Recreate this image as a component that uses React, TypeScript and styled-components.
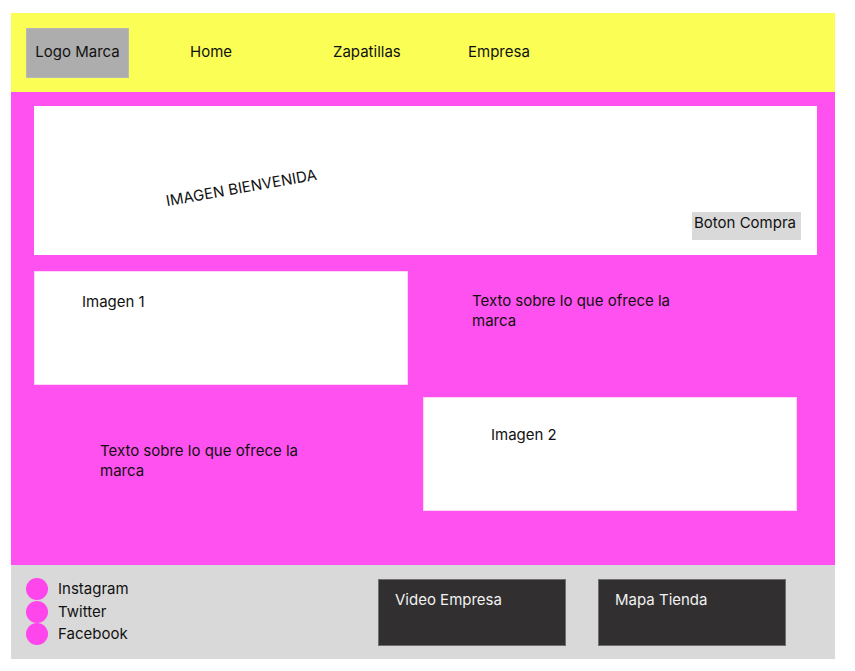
import React from "react";
import styled, { createGlobalStyle } from "styled-components";

const GlobalStyle = createGlobalStyle`
  body {
    margin: 0;
    background: #ffffff;
    font-family: Inter, "Noto Sans", "Liberation Sans", sans-serif;
    font-size: 15px;
    color: #111111;
  }
`;

const Frame = styled.div`
  width: 824px;
  margin: 13px 0 0 11px;
`;

// cabecera amarilla
const Header = styled.header`
  height: 79px;
  background: #fbff55;
  display: flex;
  align-items: flex-start;
  padding: 15px 0 0 15px;
  box-sizing: border-box;
`;

const Logo = styled.div`
  width: 103px;
  height: 50px;
  background: #adadad;
  border: 1px solid #b8b8b8;
  box-sizing: border-box;
  display: flex;
  justify-content: center;
  padding-top: 13px;
  line-height: 20px;
`;

const Nav = styled.nav`
  display: flex;
  margin-left: 61px;
  padding-top: 14px;
`;

const NavLink = styled.a<{ $w: number }>`
  width: ${(p) => p.$w}px;
  line-height: 20px;
  color: #111111;
  text-decoration: none;
`;

// zona rosa
const Main = styled.main`
  height: 473px;
  background: #ff51ef;
  padding: 14px 18px 0 23px;
  box-sizing: border-box;
`;

const Hero = styled.section`
  height: 149px;
  background: #ffffff;
  display: flex;
  align-items: flex-start;
  padding: 0 16px 15px 0;
  box-sizing: border-box;
`;

const HeroTitle = styled.span`
  margin: 72px 0 0 131px;
  line-height: 20px;
  transform: rotate(-10deg);
  transform-origin: center;
  white-space: nowrap;
`;

const BuyButton = styled.button`
  margin-left: auto;
  align-self: flex-end;
  width: 109px;
  height: 28px;
  background: #d9d9d9;
  border: none;
  padding: 1px 0 0 2px;
  display: flex;
  align-items: flex-start;
  font: inherit;
  line-height: 20px;
  color: #111111;
`;

const Row = styled.div<{ $top: number; $right?: number }>`
  display: flex;
  align-items: flex-start;
  justify-content: space-between;
  margin-top: ${(p) => p.$top}px;
  padding-right: ${(p) => p.$right ?? 0}px;
`;

const ImageBox = styled.div<{ $padTop: number; $padLeft: number }>`
  width: 374px;
  height: 114px;
  background: #ffffff;
  border: 1px solid #ffd6fa;
  box-sizing: border-box;
  padding: ${(p) => p.$padTop}px 0 0 ${(p) => p.$padLeft}px;
  line-height: 20px;
`;

const Blurb = styled.p<{ $left: number; $top: number }>`
  margin: ${(p) => p.$top}px auto 0 ${(p) => p.$left}px;
  width: 215px;
  line-height: 20px;
`;

// pie gris
const Footer = styled.footer`
  height: 94px;
  background: #d9d9d9;
  display: flex;
  align-items: flex-start;
  padding: 13px 49px 0 15px;
  box-sizing: border-box;
`;

const Socials = styled.ul`
  list-style: none;
  margin: 0;
  padding: 0;
  display: flex;
  flex-direction: column;
`;

const Social = styled.li`
  display: flex;
  align-items: center;
  gap: 10px;
  height: 22.5px;
  line-height: 20px;
`;

const Dot = styled.span`
  width: 22px;
  height: 22px;
  border-radius: 50%;
  background: #ff45ec;
  flex-shrink: 0;
`;

const Media = styled.div`
  margin-left: auto;
  display: flex;
  gap: 32px;
  padding-top: 1px;
`;

const MediaBox = styled.div`
  width: 188px;
  height: 67px;
  background: #312f30;
  border: 1px solid #6e6e6e;
  box-sizing: border-box;
  color: #f2f2f2;
  padding: 10px 0 0 16px;
  line-height: 20px;
`;

export default function App() {
  return (
    <>
      <GlobalStyle />
      <Frame>
        <Header>
          <Logo>Logo Marca</Logo>
          <Nav>
            <NavLink $w={143}>Home</NavLink>
            <NavLink $w={135}>Zapatillas</NavLink>
            <NavLink $w={100}>Empresa</NavLink>
          </Nav>
        </Header>

        <Main>
          <Hero>
            <HeroTitle>IMAGEN BIENVENIDA</HeroTitle>
            <BuyButton>Boton Compra</BuyButton>
          </Hero>

          <Row $top={16}>
            <ImageBox $padTop={20} $padLeft={47}>Imagen 1</ImageBox>
            <Blurb $left={64} $top={20}>
              Texto sobre lo que ofrece la marca
            </Blurb>
          </Row>

          <Row $top={12} $right={20}>
            <Blurb $left={66} $top={44}>
              Texto sobre lo que ofrece la marca
            </Blurb>
            <ImageBox $padTop={27} $padLeft={67}>Imagen 2</ImageBox>
          </Row>
        </Main>

        <Footer>
          <Socials>
            <Social>
              <Dot />
              Instagram
            </Social>
            <Social>
              <Dot />
              Twitter
            </Social>
            <Social>
              <Dot />
              Facebook
            </Social>
          </Socials>
          <Media>
            <MediaBox>Video Empresa</MediaBox>
            <MediaBox>Mapa Tienda</MediaBox>
          </Media>
        </Footer>
      </Frame>
    </>
  );
}
